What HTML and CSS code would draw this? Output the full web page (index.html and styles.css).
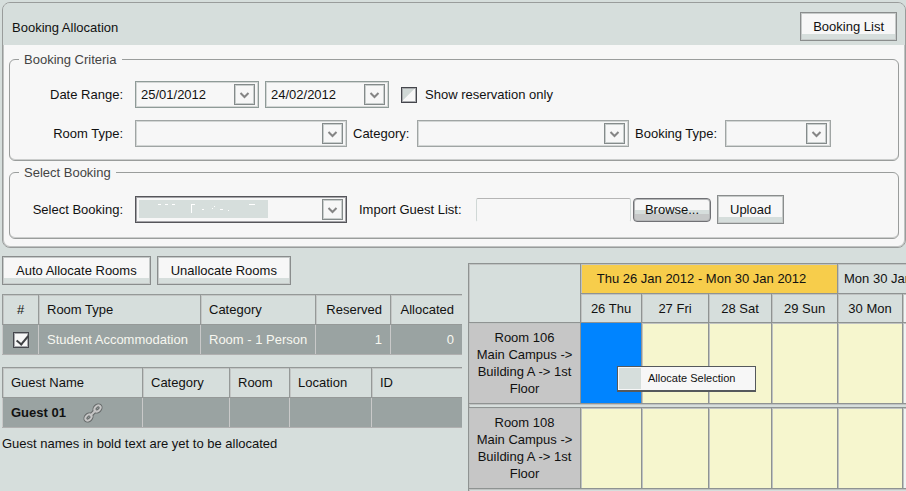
FILE: index.html
```html
<!DOCTYPE html>
<html lang="en">
<head>
  <meta charset="utf-8">
  <title>Booking Allocation</title>
  <link rel="stylesheet" href="styles.css">
</head>
<body>
  <svg width="0" height="0" class="defs">
    <symbol id="arrow" viewBox="0 0 21 21">
      <rect x="0.5" y="0.5" width="20" height="20" fill="#f7f7f7" stroke="#858b8b"/>
      <rect x="1.5" y="1.500" width="18" height="18" fill="none" stroke="#c9cecd"/>
      <path d="M6.500 9l4 4 4-4" fill="none" stroke="#858585" stroke-width="2"/>
    </symbol>
  </svg>

  <form class="panel">
    <div class="panel-header">
      <h1>Booking Allocation</h1>
      <button type="button" class="btn">Booking List</button>
    </div>

    <fieldset>
      <legend>Booking Criteria</legend>
      <div class="row">
        <label class="first" for="dateFrom">Date Range:</label>
        <div class="combo date">
          <select id="dateFrom"><option>25/01/2012</option></select>
          <svg class="arrow"><use href="#arrow"/></svg>
        </div>
        <div class="combo date">
          <select id="dateTo" aria-label="Date to"><option>24/02/2012</option></select>
          <svg class="arrow"><use href="#arrow"/></svg>
        </div>
        <label class="check"><input type="checkbox">Show reservation only</label>
      </div>
      <div class="row">
        <label class="first" for="roomType">Room Type:</label>
        <div class="combo">
          <select id="roomType"><option></option></select>
          <svg class="arrow"><use href="#arrow"/></svg>
        </div>
        <label class="category" for="category">Category:</label>
        <div class="combo">
          <select id="category"><option></option></select>
          <svg class="arrow"><use href="#arrow"/></svg>
        </div>
        <label class="type" for="bookingType">Booking Type:</label>
        <div class="combo small">
          <select id="bookingType"><option></option></select>
          <svg class="arrow"><use href="#arrow"/></svg>
        </div>
      </div>
    </fieldset>

    <fieldset class="booking">
      <legend>Select Booking</legend>
      <div class="row">
        <label class="first" for="booking">Select Booking:</label>
        <div class="combo active">
          <select id="booking"><option></option></select>
          <svg class="arrow"><use href="#arrow"/></svg>
          <svg class="masked" viewBox="0 0 129 18">
            <path d="M19 4.500h3M26 4.500h3M33 4.500h3M53 4.500h3M52.500 4v9M63 9.500h2M75 6.500h1M73 8.500h1M81 9.500h3M89 10.500h1M110 4.500h6" stroke="#fff"/>
          </svg>
        </div>
        <label class="import" for="guestList">Import Guest List:</label>
        <input type="text" id="guestList" class="file">
        <button type="button" class="browse">Browse...</button>
        <button type="button" class="btn upload">Upload</button>
      </div>
    </fieldset>
  </form>

  <div class="content">
    <div class="left">
      <div class="actions">
        <button type="button" class="btn">Auto Allocate Rooms</button>
        <button type="button" class="btn">Unallocate Rooms</button>
      </div>

      <table class="list rooms">
        <colgroup>
          <col class="c-num"><col class="c-type"><col class="c-cat"><col class="c-res"><col>
        </colgroup>
        <tr>
          <th class="center">#</th>
          <th>Room Type</th>
          <th>Category</th>
          <th class="num">Reserved</th>
          <th class="num">Allocated</th>
        </tr>
        <tr>
          <td class="center"><input type="checkbox" checked aria-label="Select room type"></td>
          <td>Student Accommodation</td>
          <td>Room - 1 Person</td>
          <td class="num">1</td>
          <td class="num">0</td>
        </tr>
      </table>

      <table class="list guests">
        <colgroup>
          <col class="c-name"><col class="c-gcat"><col class="c-room"><col class="c-loc"><col>
        </colgroup>
        <tr>
          <th>Guest Name</th>
          <th>Category</th>
          <th>Room</th>
          <th>Location</th>
          <th>ID</th>
        </tr>
        <tr>
          <td>
            <div class="guest">
              <b>Guest 01</b>
              <svg class="link" viewBox="0 0 20 20">
                <g fill="none" stroke="#656969" stroke-width="4">
                  <ellipse cx="5.500" cy="14.500" rx="3.500" ry="2.500" transform="rotate(-45 5.500 14.500)"/>
                  <ellipse cx="14.500" cy="5.500" rx="3.500" ry="2.500" transform="rotate(-45 14.500 5.500)"/>
                  <path d="M7 13l6-6"/>
                </g>
                <g fill="none" stroke="#c6c6c6" stroke-width="2">
                  <ellipse cx="5.500" cy="14.500" rx="3.500" ry="2.500" transform="rotate(-45 5.500 14.500)"/>
                  <ellipse cx="14.500" cy="5.500" rx="3.500" ry="2.500" transform="rotate(-45 14.500 5.500)"/>
                  <path d="M7 13l6-6"/>
                </g>
              </svg>
            </div>
          </td>
          <td></td>
          <td></td>
          <td></td>
          <td></td>
        </tr>
      </table>

      <p class="note">Guest names in bold text are yet to be allocated</p>
    </div>

    <div class="calendar">
      <table>
        <colgroup>
          <col class="d-room"><col class="d-thu"><col class="d-fri"><col class="d-sat"><col class="d-sun"><col class="d-mon"><col class="d-tue">
        </colgroup>
        <tr class="period">
          <th rowspan="2"></th>
          <th colspan="4" class="current">Thu 26 Jan 2012 - Mon 30 Jan 2012</th>
          <th colspan="2" class="next">Mon 30 Jan</th>
        </tr>
        <tr class="days">
          <th>26 Thu</th>
          <th>27 Fri</th>
          <th>28 Sat</th>
          <th>29 Sun</th>
          <th>30 Mon</th>
          <th class="off"></th>
        </tr>
        <tr class="slots">
          <th>Room 106<br>Main Campus -&gt;<br>Building A -&gt; 1st<br>Floor</th>
          <td class="selected"></td>
          <td></td>
          <td></td>
          <td></td>
          <td></td>
          <td class="off"></td>
        </tr>
        <tr class="gap"><td colspan="7"></td></tr>
        <tr class="slots">
          <th>Room 108<br>Main Campus -&gt;<br>Building A -&gt; 1st<br>Floor</th>
          <td></td>
          <td></td>
          <td></td>
          <td></td>
          <td></td>
          <td class="off"></td>
        </tr>
        <tr class="gap"><td colspan="7"></td></tr>
      </table>
      <div class="menu">
        <span class="menu-icon"></span>
        <button type="button">Allocate Selection</button>
      </div>
    </div>
  </div>
</body>
</html>
```

FILE: styles.css
```css
* {
  box-sizing: border-box;
}

body {
  margin: 0;
  padding: 2px 0 0 2px;
  background-color: #d6dedc;
  color: #111;
  font-family: "Liberation Sans", Arial, sans-serif;
  font-size: 13px;
  line-height: 17px;
}

button, input, select {
  font: inherit;
  color: inherit;
  margin: 0;
}

.defs {
  position: absolute;
}

/* criteria panel */
.panel {
  border: 1px solid #999c9b;
  border-radius: 8px;
  background-color: #f7f7f7;
  box-shadow: inset 0 0 0 1px #c0c3c2;
  padding-bottom: 8px;
}

.panel-header {
  display: flex;
  justify-content: space-between;
  align-items: center;
  height: 42px;
  padding: 4px 8px 0 9px;
  border-radius: 7px 7px 0 0;
  background-color: #d6dedc;
}

h1 {
  margin: 0;
  padding-top: 2px;
  font-size: 13px;
  font-weight: normal;
}

.btn {
  height: 29px;
  padding: 0 12px;
  border: 1px solid #8a8d8d;
  border-radius: 0;
  background: linear-gradient(#f7f7f7 21px, #d6dedc 21px);
  box-shadow: inset 0 0 0 1px #c6cac9;
  white-space: nowrap;
}

fieldset {
  margin: 6px 6px 0;
  padding: 13px 0 13px 9px;
  border: 1px solid #9a9d9c;
  border-radius: 6px;
  box-shadow: inset 0 -1px #cccecd;
}

legend {
  padding: 0 5px;
  color: #444;
}

fieldset.booking {
  margin-top: 3px;
  padding: 14px 0 14px 9px;
}

.row {
  display: flex;
  align-items: center;
  gap: 6px;
}

.row + .row {
  margin-top: 12px;
}

.first {
  width: 104px;
  margin-right: 6px;
  text-align: right;
}

.category {
  width: 58px;
}

.type {
  width: 84px;
}

.combo {
  position: relative;
  display: flex;
  align-items: center;
  width: 212px;
  height: 27px;
  padding-right: 3px;
  border: 1px solid #a0a5a4;
  box-shadow: inset 0 0 0 1px #d3d6d5;
}

.combo.date {
  width: 124px;
  border-color: #8f9b98;
}

.combo.small {
  width: 106px;
}

.combo.active {
  border-color: #55555a;
  box-shadow: inset 0 0 0 1px #a4a4a8;
}

.combo select {
  flex: 1;
  min-width: 0;
  padding: 0 5px;
  border: none;
  background: none;
  appearance: none;
}

.arrow {
  width: 21px;
  height: 21px;
}

.masked {
  position: absolute;
  left: 3px;
  top: 3px;
  width: 129px;
  height: 18px;
  background-color: #d6dedc;
}

.check {
  display: flex;
  align-items: center;
  gap: 8px;
  margin-left: 6px;
}

input[type="checkbox"] {
  width: 16px;
  height: 16px;
  border: 1px solid #45464c;
  background: linear-gradient(135deg, #d0d8d6 45%, #f7f7f7 50%);
  box-shadow: inset 0 0 0 1px #a8aaad;
  appearance: none;
}

.import {
  width: 104px;
  margin: 0 7px 0 6px;
}

.file {
  width: 155px;
  height: 24px;
  border: 1px solid #d0d8d6;
  border-top-color: #b5b5b5;
  border-bottom-color: #f7f7f7;
  border-radius: 2px;
  background-color: #f7f7f7;
}

.browse {
  width: 78px;
  height: 24px;
  margin-left: -4px;
  padding: 0;
  border: 1px solid #707175;
  border-radius: 4px;
  background: linear-gradient(#f7f7f7 11px, #d6dedc 11px, #d6dedc 15px, #c6c8c8 15px);
  box-shadow: inset 0 0 0 1px #b4b6b7;
}

/* lists on the left */
.content {
  display: flex;
  align-items: flex-start;
  gap: 6px;
  padding-top: 8px;
}

.left {
  flex: 0 0 460px;
}

.actions {
  display: flex;
  gap: 6px;
}

.actions .btn {
  padding: 0 13px;
}

table {
  border-collapse: collapse;
  table-layout: fixed;
}

th {
  font-weight: normal;
}

.list {
  width: 100%;
}

.list th, .list td {
  height: 30px;
  padding: 0 8px;
  border: 1px solid #959998;
  box-shadow: inset 1px 1px #c3c6c5;
  text-align: left;
  white-space: nowrap;
}

.list td {
  background-color: #9aa3a2;
  border-color: #c9c9c9;
  border-bottom-color: #b0b0b0;
  border-top-color: #8a9190;
  box-shadow: none;
}

.list th:last-child, .list td:last-child {
  border-right: none;
}

.list .center {
  padding: 0;
  text-align: center;
}

.list .num {
  text-align: right;
}

.rooms {
  margin-top: 9px;
}

.rooms td {
  color: #f7f7f0;
}

.rooms input[type="checkbox"] {
  display: block;
  margin: 0 auto;
  background: #f7f7f7;
}

.rooms input:checked::before {
  content: "";
  display: block;
  width: 5px;
  height: 10px;
  margin-left: 5px;
  border: solid #3f4144;
  border-width: 0 2px 2px 0;
  transform: rotate(40deg);
}

.guests {
  margin-top: 12px;
}

.c-num { width: 36px; }
.c-type { width: 162px; }
.c-cat { width: 115px; }
.c-res { width: 75px; }

.c-name { width: 140px; }
.c-gcat { width: 87px; }
.c-room { width: 60px; }
.c-loc { width: 82px; }

.guest {
  display: flex;
  align-items: center;
  gap: 17px;
}

.link {
  width: 20px;
  height: 20px;
}

.note {
  margin: 7px 0 0;
}

/* room calendar */
.calendar {
  position: relative;
  flex: 1;
  min-width: 0;
  margin-top: 7px;
  overflow: hidden;
}

.calendar table {
  width: 496px;
}

.calendar th, .calendar td {
  padding: 0;
  border: 1px solid #8f9392;
  box-shadow: inset 1px 1px #c0c3c2;
}

.period th {
  height: 30px;
}

.calendar .current {
  background-color: #f7cd4b;
  padding-right: 15px;
}

.calendar .next {
  padding-left: 6px;
  text-align: left;
  white-space: nowrap;
}

.days th {
  height: 29px;
}

.slots th {
  height: 81px;
  background-color: #c6c6c6;
}

.slots td {
  background-color: #f6f6ce;
}

.slots .selected {
  background-color: #0084ff;
  box-shadow: none;
}

.calendar .off {
  background-color: #f0f4f3;
}

.gap td {
  height: 4px;
}

.d-room { width: 112px; }
.d-thu { width: 61px; }
.d-fri { width: 67px; }
.d-sat { width: 63px; }
.d-sun { width: 66px; }
.d-mon { width: 65px; }
.d-tue { width: 62px; }

.menu {
  position: absolute;
  left: 149px;
  top: 103px;
  display: flex;
  width: 139px;
  height: 26px;
  padding: 1px;
  border: 1px solid #55595c;
  border-bottom-width: 2px;
  background-color: #f7f7f7;
}

.menu-icon {
  width: 22px;
  background-color: #d6dedc;
}

.menu button {
  padding: 0 7px;
  border: none;
  background: none;
  font-size: 11px;
}
```
